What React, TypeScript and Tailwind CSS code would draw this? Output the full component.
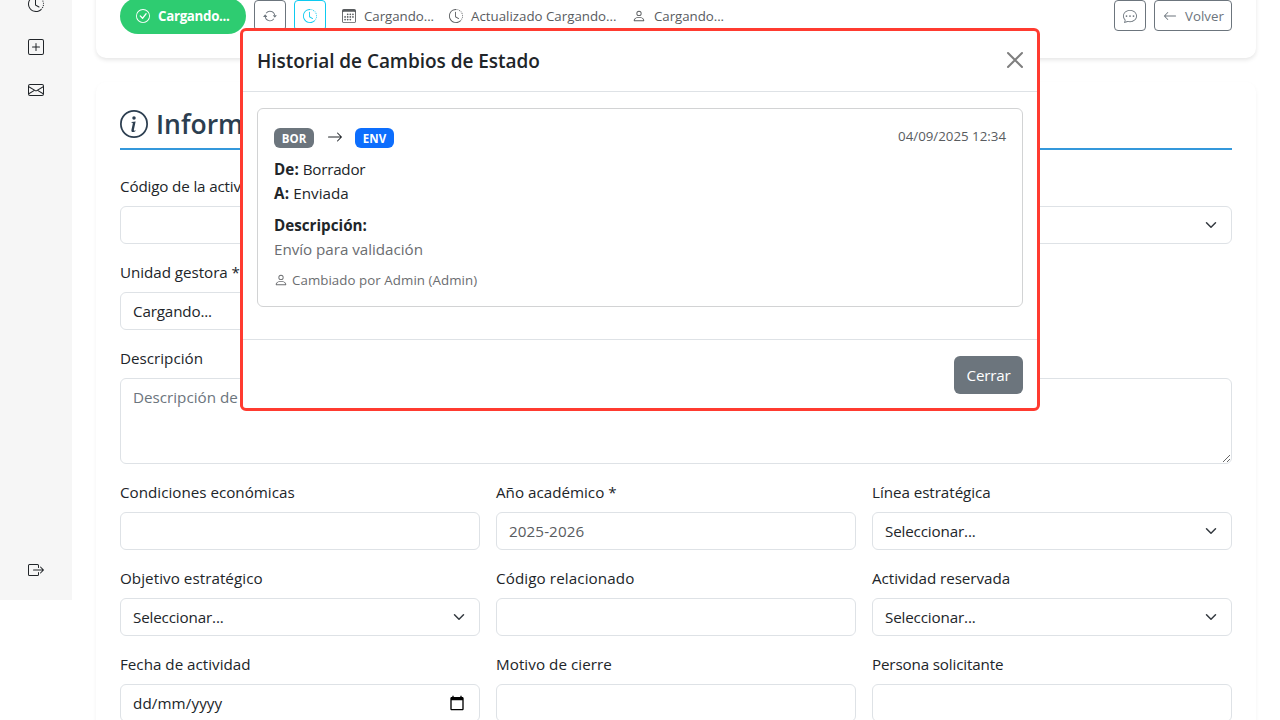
import type { ReactNode } from 'react';
import {
  BsArrowLeft,
  BsArrowRepeat,
  BsArrowRight,
  BsBoxArrowRight,
  BsCalendar3,
  BsChatDots,
  BsCheckCircle,
  BsClockHistory,
  BsEnvelope,
  BsInfoCircle,
  BsPerson,
  BsPlusSquare,
} from 'react-icons/bs';

const control = 'h-[38px] w-full rounded-md border border-[#dee2e6] bg-white px-3 flex items-center';

function Field({ label, children, className = '' }: { label: string; children?: ReactNode; className?: string }) {
  return (
    <div className={className}>
      <div className="mb-2 h-6 whitespace-nowrap">{label}</div>
      {children ?? <div className={control} />}
    </div>
  );
}

function Select({ value }: { value: string }) {
  return (
    <div className={`${control} justify-between`}>
      <span className="tracking-[-0.15px]">{value}</span>
      <svg viewBox="0 0 16 16" className="h-3 w-4" fill="none" stroke="#343a40" strokeWidth="2" strokeLinecap="round" strokeLinejoin="round">
        <path d="m2 5 6 6 6-6" />
      </svg>
    </div>
  );
}

function Sidebar() {
  return (
    <aside className="flex h-[600px] w-[72px] shrink-0 flex-col items-center bg-[#f6f6f6] text-[#212529]">
      <BsClockHistory className="-mt-1 h-4 w-4" />
      <BsPlusSquare className="mt-[27px] h-4 w-4" />
      <BsEnvelope className="mt-[27px] h-4 w-4" />
      <BsBoxArrowRight className="mt-auto mb-[22px] h-4 w-4" />
    </aside>
  );
}

function Toolbar() {
  return (
    <section className="-mt-[26px] flex h-[84px] shrink-0 items-start rounded-[10px] bg-white p-6 shadow-[0_2px_4px_rgba(0,0,0,0.1)]">
      <div className="flex h-9 w-full items-center text-[13.3px] text-[#595c5f]">
        <div className="flex h-9 w-[126px] items-center rounded-full bg-[#2ecc71] pl-4 font-bold text-white">
          <BsCheckCircle className="mr-2 h-[14px] w-[14px]" />
          <span className="tracking-[-0.3px]">Cargando...</span>
        </div>
        <div className="mb-px ml-2 flex h-[31px] w-8 items-center justify-center rounded border border-[#6c757d] text-[#6c757d]">
          <BsArrowRepeat className="h-[14px] w-[14px]" />
        </div>
        <div className="mb-px ml-2 flex h-[31px] w-8 items-center justify-center rounded border border-[#0dcaf0] text-[#0dcaf0]">
          <BsClockHistory className="h-[14px] w-[14px]" />
        </div>
        <BsCalendar3 className="mr-2 ml-4 h-[14px] w-[14px]" />
        <span className="w-[70px] tracking-[-0.05px] whitespace-nowrap">Cargando...</span>
        <BsClockHistory className="mr-2 ml-[15px] h-[14px] w-[14px]" />
        <span className="w-[146px] whitespace-nowrap">Actualizado Cargando...</span>
        <BsPerson className="mr-2 ml-[15px] h-[14px] w-[14px]" />
        <span className="tracking-[-0.05px]">Cargando...</span>
        <div className="mb-px ml-auto flex h-[31px] w-8 items-center justify-center rounded border border-[#6c757d] text-[#6c757d]">
          <BsChatDots className="h-[14px] w-[14px]" />
        </div>
        <div className="mb-px ml-2 flex h-[31px] w-[78px] items-center rounded border border-[#6c757d] pl-2 text-[#6c757d]">
          <BsArrowLeft className="mr-2 h-[14px] w-[14px]" />
          <span>Volver</span>
        </div>
      </div>
    </section>
  );
}

function InformationForm() {
  return (
    <section className="mt-6 h-[700px] shrink-0 rounded-[10px] bg-white p-6 shadow-[0_2px_4px_rgba(0,0,0,0.05)]">
      <h2 className="mb-6 flex h-11 items-start gap-2 border-b-2 border-[#3498db] text-[26.5px] leading-[36px] font-semibold text-[#2c3e50]">
        <BsInfoCircle className="mt-1 h-7 w-7" />
        <span>Información</span>
      </h2>
      <div className="grid grid-cols-3 gap-4">
        <Field label="Código de la actividad" className="tracking-[-0.15px]" />
        <Field label="Estado" />
        <Field label="Tipo">
          <Select value="" />
        </Field>
        <Field label="Unidad gestora *" className="col-span-3 pr-[376px] tracking-[-0.05px]">
          <Select value="Cargando..." />
        </Field>
        <Field label="Descripción" className="col-span-3">
          <textarea
            className="block h-[86px] w-full resize-y rounded-md border border-[#dee2e6] bg-white px-3 py-1.5 placeholder:text-[#6c757d]"
            placeholder="Descripción de la actividad"
          />
        </Field>
        <Field label="Condiciones económicas" />
        <Field label="Año académico *">
          <div className={`${control} tracking-[0.1px] text-[#595c5f]`}>2025-2026</div>
        </Field>
        <Field label="Línea estratégica" className="tracking-[-0.05px]">
          <Select value="Seleccionar..." />
        </Field>
        <Field label="Objetivo estratégico" className="tracking-[0.05px]">
          <Select value="Seleccionar..." />
        </Field>
        <Field label="Código relacionado" className="tracking-[0.1px]" />
        <Field label="Actividad reservada" className="tracking-[-0.05px]">
          <Select value="Seleccionar..." />
        </Field>
        <Field label="Fecha de actividad">
          <div className={`${control} justify-between`}>
            <span className="tracking-[0.1px]">dd/mm/yyyy</span>
            <svg viewBox="0 0 24 24" className="mr-0.5 h-4 w-4" fill="#000">
              <path d="M20 3h-1V1h-2v2H7V1H5v2H4c-1.1 0-2 .9-2 2v16c0 1.1.9 2 2 2h16c1.1 0 2-.9 2-2V5c0-1.1-.9-2-2-2zm0 18H4V8h16v13z" />
            </svg>
          </div>
        </Field>
        <Field label="Motivo de cierre" className="tracking-[0.05px]" />
        <Field label="Persona solicitante" className="tracking-[-0.15px]" />
      </div>
    </section>
  );
}

function HistoryDialog() {
  return (
    <div role="dialog" className="absolute top-[28px] left-[240px] flex h-[383px] w-[800px] flex-col rounded-md border-[3px] border-[#ff3b30] bg-white">
      <header className="flex h-[61px] shrink-0 items-center justify-between border-b border-[#dee2e6] px-[14px]">
        <h5 className="text-[19px] font-semibold tracking-[-0.04px]">Historial de Cambios de Estado</h5>
        <svg viewBox="0 0 16 16" className="mb-0.5 h-4 w-4 overflow-visible" stroke="#7f7f7f" strokeWidth="2" strokeLinecap="round">
          <path d="m1 1 14 14M15 1 1 15" />
        </svg>
      </header>
      <div className="mx-[14px] mt-4 h-[199px] shrink-0 rounded-md border border-[#d2d3d4] p-4">
        <div className="flex items-start justify-between">
          <div className="mt-[3px] flex h-5 items-center text-[11.5px] leading-[21px] font-bold text-white">
            <span className="h-5 w-10 rounded-md bg-[#6c757d] text-center">BOR</span>
            <BsArrowRight className="mx-[12.5px] mb-0.5 h-4 w-4 text-[#212529]" />
            <span className="h-5 w-[39px] rounded-md bg-[#0d6efd] text-center">ENV</span>
          </div>
          <span className="text-[13.3px] leading-[22px] text-[#595c5f]">04/09/2025 12:34</span>
        </div>
        <p className="mt-[9px]"><strong className="tracking-[0.1px]">De:</strong> <span className="tracking-[-0.25px]">Borrador</span></p>
        <p><strong className="tracking-[0.3px]">A:</strong> Enviada</p>
        <p className="mt-2"><strong>Descripción:</strong></p>
        <p className="tracking-[-0.03px] text-[#6b6d70]">Envío para validación</p>
        <p className="mt-2 flex items-center text-[13.3px] leading-[22px] text-[#6b6d70]">
          <BsPerson className="mr-1 h-[14px] w-[14px]" />
          <span className="tracking-[0.06px]">Cambiado por Admin (Admin)</span>
        </p>
      </div>
      <footer className="mt-8 flex flex-1 items-start justify-end border-t border-[#dee2e6] px-[14px] pt-4">
        <button className="h-[38px] w-[69px] rounded-md bg-[#6c757d] tracking-[-0.2px] text-white">Cerrar</button>
      </footer>
    </div>
  );
}

export default function App() {
  return (
    <div className="relative flex h-[720px] w-[1280px] items-start overflow-hidden bg-white font-['Open_Sans','Noto_Sans',sans-serif] text-[15.2px] leading-6 text-[#212529]">
      <Sidebar />
      <main className="flex min-w-0 flex-1 flex-col px-6">
        <Toolbar />
        <InformationForm />
      </main>
      <HistoryDialog />
    </div>
  );
}
